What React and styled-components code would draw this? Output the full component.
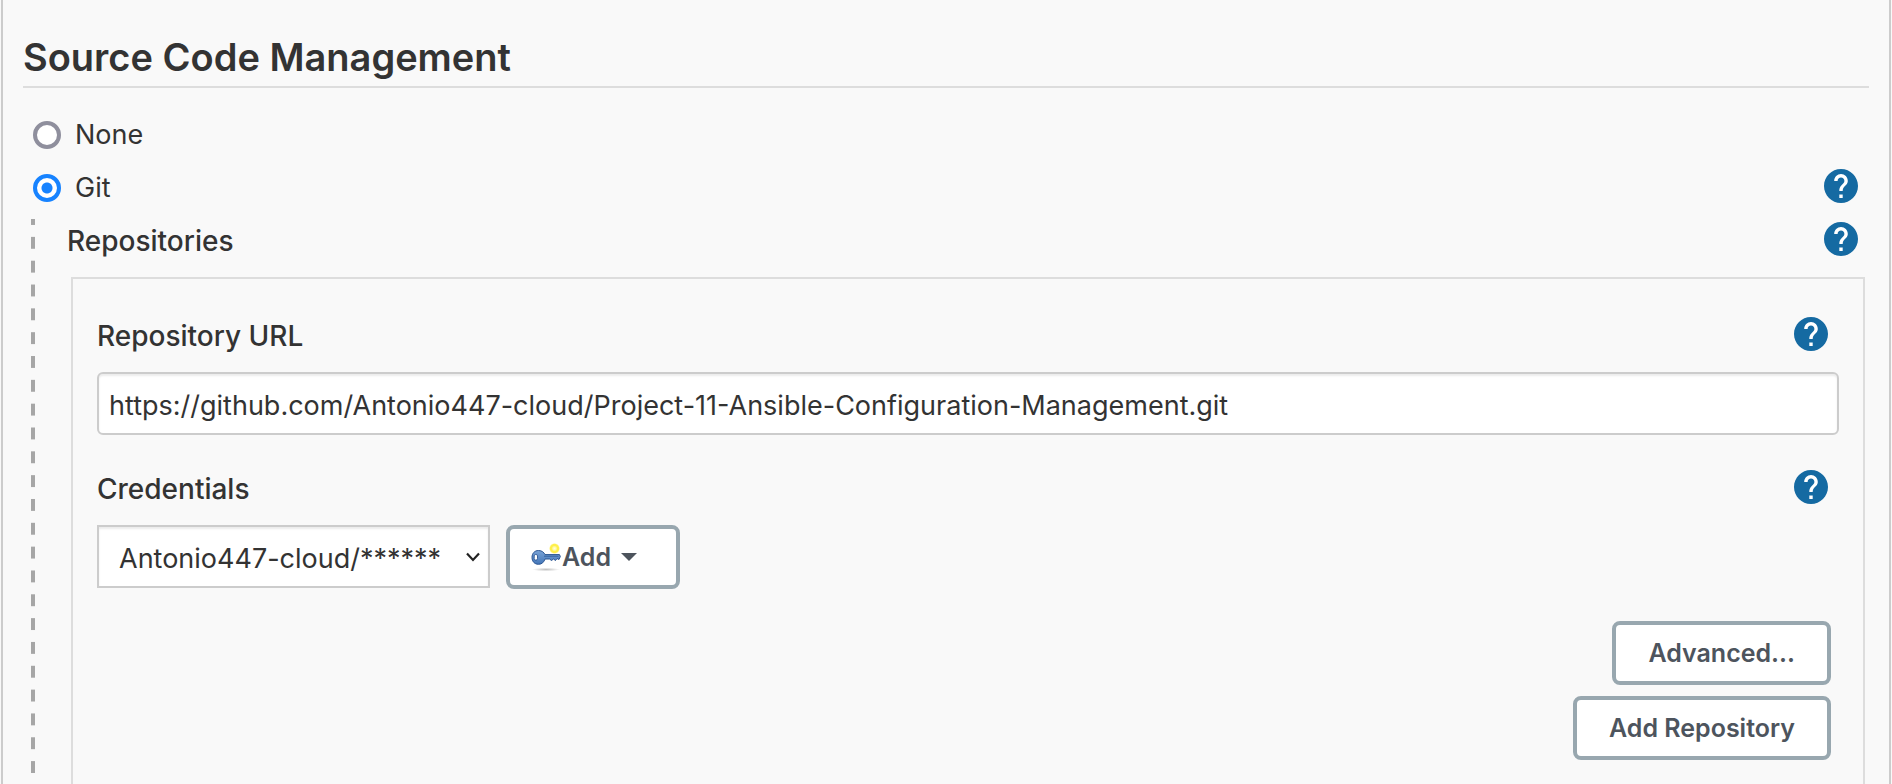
import React, { useState } from "react";
import styled, { createGlobalStyle } from "styled-components";

const GlobalStyle = createGlobalStyle`
  *, *::before, *::after { box-sizing: border-box; }
  html, body { margin: 0; padding: 0; background: #f9f9f9; }
  body, input, select, button {
    font-family: Inter, "Liberation Sans", sans-serif;
    color: #333;
  }
`;

const Page = styled.main`
  height: 100vh;
  overflow: hidden;
  padding: 0 1px;
  background: #f9f9f9;
`;

const Section = styled.section`
  min-height: 100vh;
  padding: 32px 20px 0;
  border: solid #ccc;
  border-width: 0 2px;
`;

const SectionTitle = styled.h1`
  margin: 0;
  padding-bottom: 4px;
  border-bottom: 2px solid #ddd;
  font-size: 38px;
  line-height: 50px;
  font-weight: 600;
`;

const Choices = styled.div`
  padding: 20px 11px 0 10px;
`;

const Choice = styled.label`
  display: flex;
  align-items: center;
  gap: 14px;
  font-size: 27px;
  line-height: 32px;
`;

const Radio = styled.input`
  appearance: none;
  width: 28px;
  height: 28px;
  margin: 0;
  border: 4px solid #8f8f9d;
  border-radius: 50%;
  background: #fff;
  &:checked {
    border-color: #1783ff;
    background: radial-gradient(circle, #1783ff 5px, #fff 6px);
  }
`;

const HelpButton = styled.button`
  display: block;
  width: 34px;
  height: 34px;
  padding: 0;
  border: 0;
  border-radius: 50%;
  background: none;
  color: #156aa2;
  cursor: pointer;
  svg { display: block; width: 34px; height: 34px; }
`;

const ChoiceRow = styled.div`
  display: flex;
  align-items: center;
  justify-content: space-between;
  height: 53px;
  ${HelpButton} { margin-bottom: 4px; }
`;

const Nested = styled.div`
  height: 572px;
  margin: 5px 4px 0 8px;
  padding-left: 40px;
  background: linear-gradient(#a6a6a6 6px, transparent 6px, transparent 18px, #a6a6a6 18px) 0 0 / 4px 24px;
  background-repeat: no-repeat round;
`;

const FieldHead = styled.div`
  display: flex;
  align-items: flex-start;
  justify-content: space-between;
`;

const GroupHead = styled(FieldHead)`
  margin-left: -4px;
  padding: 3px 7px 21px 0;
`;

const FieldLabel = styled.label`
  padding-top: 4px;
  font-size: 28px;
  line-height: 30px;
  font-weight: 500;
`;

const RepositoryBox = styled.div`
  height: 100%;
  padding: 38px 24px 0;
  border: 2px solid #ddd;
`;

const Field = styled.div`
  margin-bottom: 35px;
  ${FieldHead} { padding: 0 11px 21px 0; }
`;

const UrlInput = styled.input`
  display: block;
  width: 100%;
  height: 63px;
  padding: 3px 10px 0;
  border: 2px solid #ccc;
  border-radius: 6px;
  background: #fff;
  box-shadow: inset 0 2px 2px rgba(0, 0, 0, 0.08);
  font-size: 27px;
`;

const Controls = styled.div`
  display: flex;
  align-items: flex-start;
  gap: 16px;
`;

const SelectWrap = styled.div`
  display: grid;
  width: 393px;
  align-items: center;
  > * { grid-area: 1 / 1; }
  svg {
    justify-self: end;
    width: 16px;
    height: 12px;
    margin-right: 9px;
    pointer-events: none;
  }
`;

const Select = styled.select`
  appearance: none;
  width: 100%;
  height: 63px;
  padding: 3px 36px 0 20px;
  border: 2px solid #ccc;
  border-radius: 0;
  background: #fff;
  box-shadow: inset 0 2px 2px rgba(0, 0, 0, 0.08);
  font-size: 27px;
`;

const Button = styled.button`
  display: flex;
  align-items: center;
  height: 64px;
  padding: 0 32px;
  border: 4px solid #98a7af;
  border-radius: 8px;
  background: #fff;
  color: #4d545d;
  font-size: 25px;
  font-weight: 600;
  white-space: nowrap;
  cursor: pointer;
`;

const AddButton = styled(Button)`
  width: 174px;
  padding: 0 20px;
`;

const KeyArt = styled.svg`
  width: 32px;
  height: 32px;
`;

const Caret = styled.svg`
  width: 16px;
  height: 8px;
  margin-left: 10px;
`;

const Actions = styled.div`
  display: flex;
  flex-direction: column;
  align-items: flex-end;
  gap: 11px;
  margin-top: -3px;
  padding-right: 8px;
`;

function Help({ topic }) {
  return (
    <HelpButton type="button" aria-label={`Help for ${topic}`}>
      <svg viewBox="2 2 20 20" aria-hidden="true">
        <circle cx="12" cy="12" r="9.5" fill="#fff" />
        <path
          fill="currentColor"
          d="M12 2C6.48 2 2 6.48 2 12s4.48 10 10 10 10-4.48 10-10S17.52 2 12 2zm1 17h-2v-2h2v2zm2.07-7.75l-.9.92C13.45 12.9 13 13.5 13 15h-2v-.5c0-1.1.45-2.1 1.17-2.83l1.24-1.26c.37-.36.59-.86.59-1.41 0-1.1-.9-2-2-2s-2 .9-2 2H8c0-2.21 1.79-4 4-4s4 1.79 4 4c0 .88-.36 1.68-.93 2.25z"
        />
      </svg>
    </HelpButton>
  );
}

function KeyIcon() {
  return (
    <KeyArt viewBox="0 0 32 32" aria-hidden="true">
      <defs>
        <linearGradient id="keyFill" x1="0" y1="0" x2="0" y2="1">
          <stop offset="0" stopColor="#7aa3d6" />
          <stop offset="1" stopColor="#4376b8" />
        </linearGradient>
        <radialGradient id="keyShade">
          <stop offset="0" stopColor="#000" stopOpacity="0.25" />
          <stop offset="1" stopColor="#000" stopOpacity="0" />
        </radialGradient>
        <radialGradient id="keyGlow">
          <stop offset="0" stopColor="#fffde0" />
          <stop offset="0.3" stopColor="#fff9a8" />
          <stop offset="0.55" stopColor="#fff04a" />
          <stop offset="0.75" stopColor="#fff04a" />
          <stop offset="1" stopColor="#fff04a" stopOpacity="0" />
        </radialGradient>
      </defs>
      <ellipse cx="16" cy="28.5" rx="14" ry="1.8" fill="url(#keyShade)" />
      <circle cx="24.5" cy="7.5" r="5.5" fill="url(#keyGlow)" />
      <path
        d="M8.5 9.500C12 9.500 14 11.500 15 13.600H29.500L30.300 15.500L29 18.500L27 17.500L25.500 19.500L23.500 18L21.500 19.500L19.500 18H15C14 21 12 23.300 8.500 23.300C4.500 23.300 2 20.300 2 16.400C2 12.500 4.500 9.500 8.500 9.500Z"
        fill="url(#keyFill)"
        stroke="#2b5592"
      />
      <path d="M14 15.200H28.500" stroke="#2b5592" strokeWidth="0.8" />
      <rect x="4.2" y="13.5" width="3.3" height="5.6" rx="1.4" fill="#fff" stroke="#2b5592" strokeWidth="0.9" />
    </KeyArt>
  );
}

export default function App() {
  const [scm, setScm] = useState("git");
  const [url, setUrl] = useState(
    "https://github.com/Antonio447-cloud/Project-11-Ansible-Configuration-Management.git"
  );

  return (
    <>
      <GlobalStyle />
      <Page>
        <Section>
          <SectionTitle>Source Code Management</SectionTitle>
          <Choices>
            <ChoiceRow>
              <Choice>
                <Radio type="radio" name="scm" checked={scm === "none"} onChange={() => setScm("none")} />
                None
              </Choice>
            </ChoiceRow>
            <ChoiceRow>
              <Choice>
                <Radio type="radio" name="scm" checked={scm === "git"} onChange={() => setScm("git")} />
                Git
              </Choice>
              <Help topic="Git" />
            </ChoiceRow>
          </Choices>
          <Nested>
            <GroupHead>
              <FieldLabel as="div">Repositories</FieldLabel>
              <Help topic="Repositories" />
            </GroupHead>
            <RepositoryBox>
              <Field>
                <FieldHead>
                  <FieldLabel htmlFor="repository-url">Repository URL</FieldLabel>
                  <Help topic="Repository URL" />
                </FieldHead>
                <UrlInput id="repository-url" type="text" value={url} onChange={(e) => setUrl(e.target.value)} />
              </Field>
              <Field>
                <FieldHead>
                  <FieldLabel htmlFor="credentials">Credentials</FieldLabel>
                  <Help topic="Credentials" />
                </FieldHead>
                <Controls>
                  <SelectWrap>
                    <Select id="credentials">
                      <option>Antonio447-cloud/******</option>
                    </Select>
                    <svg viewBox="0 0 16 12" aria-hidden="true">
                      <path d="M2 2.5L8 9L14 2.5" fill="none" stroke="#222" strokeWidth="2.2" />
                    </svg>
                  </SelectWrap>
                  <AddButton type="button">
                    <KeyIcon />
                    Add
                    <Caret viewBox="0 0 16 8" aria-hidden="true">
                      <path d="M0 0H16L8 8Z" fill="#4d545d" />
                    </Caret>
                  </AddButton>
                </Controls>
              </Field>
              <Actions>
                <Button type="button">Advanced...</Button>
                <Button type="button">Add Repository</Button>
              </Actions>
            </RepositoryBox>
          </Nested>
        </Section>
      </Page>
    </>
  );
}
